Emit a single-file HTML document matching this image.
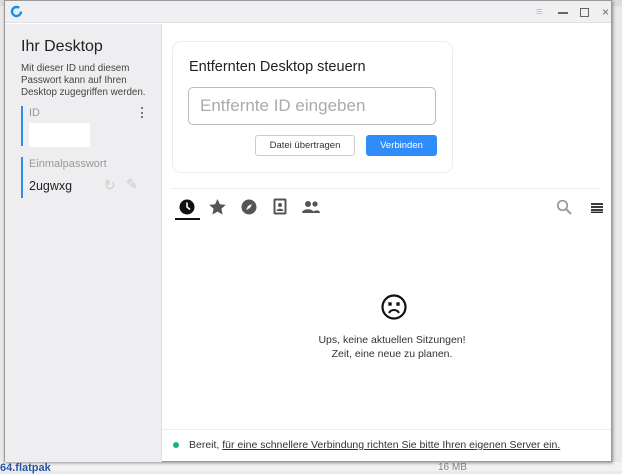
<!DOCTYPE html>
<html><head><meta charset="utf-8"><style>
*{margin:0;padding:0;box-sizing:border-box}
body{width:622px;height:471px;overflow:hidden;background:#e9e9e9;font-family:"Liberation Sans",sans-serif;position:relative;color:#222}
.a{position:absolute}
</style></head><body>
<div class="a" style="left:0;top:0;width:622px;height:6px;background:#dcdcdc"></div>
<div class="a" style="left:0;top:462px;width:622px;height:9px;background:#f2f2f2"></div>
<div class="a" style="left:0;top:462px;font-size:11px;color:#2b55a8;font-weight:bold">64.flatpak</div>
<div class="a" style="left:438px;top:462px;font-size:10px;color:#888">16 MB</div>
<div class="a" style="left:4px;top:0;width:608px;height:462px;background:#fff;border:1px solid #9a9a9a;box-shadow:1px 1px 3px rgba(0,0,0,.4)">
 <div class="a" style="left:0;top:0;width:606px;height:22px;background:#f0f0f2;border-bottom:1px solid #e2e2e2"></div>
 <svg class="a" style="left:5px;top:4px" width="13" height="13" viewBox="0 0 13 13"><circle cx="6.5" cy="6.5" r="4.5" fill="none" stroke="#1a8fe8" stroke-width="2.4" stroke-dasharray="24 5"/></svg>
 <div class="a" style="left:531px;top:5px;color:#bbb;font-size:11px">≡</div>
 <div class="a" style="left:553px;top:11px;width:10px;height:1.5px;background:#666"></div>
 <div class="a" style="left:575px;top:7px;width:9px;height:9px;border:1px solid #666"></div>
 <div class="a" style="left:597px;top:4px;color:#666;font-size:12px">×</div>
 <div class="a" style="left:0;top:23px;width:157px;height:438px;background:#eeeef0;border-right:1px solid #e0e0e0"></div>
 <div class="a" style="left:16px;top:37px;font-size:16px;color:#222">Ihr Desktop</div>
 <div class="a" style="left:16px;top:62px;font-size:9.8px;line-height:12px;color:#444;width:145px">Mit dieser ID und diesem<br>Passwort kann auf Ihren<br>Desktop zugegriffen werden.</div>
 <div class="a" style="left:16px;top:105px;width:2px;height:40px;background:#2f8cf0"></div>
 <div class="a" style="left:24px;top:106px;font-size:11px;color:#999">ID</div>
 <div class="a" style="left:136px;top:106px;width:2px;height:11px;border-left:2px dotted #777"></div>
 <div class="a" style="left:24px;top:122px;width:61px;height:24px;background:#fff"></div>
 <div class="a" style="left:16px;top:156px;width:2px;height:41px;background:#2f8cf0"></div>
 <div class="a" style="left:24px;top:157px;font-size:11px;color:#999">Einmalpasswort</div>
 <div class="a" style="left:24px;top:178px;font-size:12.5px;color:#222">2ugwxg</div>
 <div class="a" style="left:99px;top:176px;font-size:14px;color:#ccc">↻</div>
 <div class="a" style="left:121px;top:175px;font-size:14px;color:#ccc">✎</div>
 <div class="a" style="left:167px;top:40px;width:281px;height:132px;border:1px solid #ececec;border-radius:9px;background:#fff"></div>
 <div class="a" style="left:184px;top:58px;font-size:14.5px;color:#222">Entfernten Desktop steuern</div>
 <div class="a" style="left:183px;top:86px;width:248px;height:38px;border:1px solid #bbb;border-radius:5px;padding:8px 11px;font-size:17px;color:#aaa">Entfernte ID eingeben</div>
 <div class="a" style="left:250px;top:134px;width:100px;height:21px;border:1px solid #ccc;border-radius:3px;font-size:9.5px;text-align:center;line-height:19px;color:#333">Datei übertragen</div>
 <div class="a" style="left:361px;top:134px;width:71px;height:21px;background:#2f8cf8;border-radius:3px;font-size:9.5px;text-align:center;line-height:21px;color:#fff">Verbinden</div>
 <div class="a" style="left:167px;top:187px;width:428px;height:1px;background:#ececec"></div>
 <svg class="a" style="left:174px;top:198px" width="16" height="16" viewBox="0 0 16 16"><circle cx="8" cy="8" r="7.5" fill="#111"/><path d="M8 3.5V8l3 2.5" stroke="#fff" stroke-width="1.6" fill="none"/></svg>
 <div class="a" style="left:170px;top:217px;width:25px;height:2px;background:#111"></div>
 <svg class="a" style="left:204px;top:198px" width="17" height="16" viewBox="0 0 24 23"><path d="M12 0l3.5 7.6 8.3.9-6.2 5.6 1.8 8.2L12 18.1 4.6 22.3l1.8-8.2L.2 8.5l8.3-.9z" fill="#555"/></svg>
 <svg class="a" style="left:236px;top:198px" width="16" height="16" viewBox="0 0 16 16"><circle cx="8" cy="8" r="7.5" fill="#555"/><path d="M11 5L9 9 5 11 7 7z" fill="#fff"/></svg>
 <svg class="a" style="left:268px;top:197px" width="14" height="17" viewBox="0 0 14 17"><rect x="0.5" y="0.5" width="13" height="16" rx="1.5" fill="#555"/><rect x="2.5" y="2.5" width="9" height="12" fill="#fff"/><circle cx="7" cy="7" r="2" fill="#555"/><path d="M3.5 13c0-3 7-3 7 0z" fill="#555"/></svg>
 <svg class="a" style="left:296px;top:199px" width="20" height="14" viewBox="0 0 20 14"><circle cx="7" cy="4" r="3" fill="#555"/><circle cx="14" cy="4" r="2.6" fill="#555"/><path d="M1 13c0-5 12-5 12 0z M12 13c0-3 7-4 7 0z" fill="#555"/></svg>
 <svg class="a" style="left:551px;top:198px" width="16" height="16" viewBox="0 0 16 16"><circle cx="6.5" cy="6.5" r="4.8" stroke="#999" stroke-width="1.7" fill="none"/><path d="M10 10l5 5" stroke="#999" stroke-width="2"/></svg>
 <svg class="a" style="left:586px;top:202px" width="12" height="10" viewBox="0 0 12 10"><path d="M0 1h12M0 4h12M0 7h12M0 9.5h12" stroke="#222" stroke-width="1.8"/></svg>
 <svg class="a" style="left:375px;top:292px" width="28" height="28" viewBox="0 0 28 28"><circle cx="14" cy="14" r="11.5" stroke="#111" stroke-width="2.2" fill="none"/><path d="M8.5 9.5l3 3M11.5 9.5l-3 3M16.5 9.5l3 3M19.5 9.5l-3 3" stroke="#111" stroke-width="1.6"/><path d="M9 20c2-4 8-4 10 0" stroke="#111" stroke-width="2" fill="none"/></svg>
 <div class="a" style="left:247px;top:332px;width:280px;text-align:center;font-size:10.5px;line-height:14px;color:#333">Ups, keine aktuellen Sitzungen!<br>Zeit, eine neue zu planen.</div>
 <div class="a" style="left:157px;top:428px;width:449px;height:1px;background:#ececec"></div>
 <div class="a" style="left:168px;top:441px;width:6px;height:6px;border-radius:50%;background:#20b090"></div>
 <div class="a" style="left:184px;top:438px;font-size:10.5px;color:#333">Bereit, <span style="text-decoration:underline">für eine schnellere Verbindung richten Sie bitte Ihren eigenen Server ein.</span></div>
</div>
</body></html>
